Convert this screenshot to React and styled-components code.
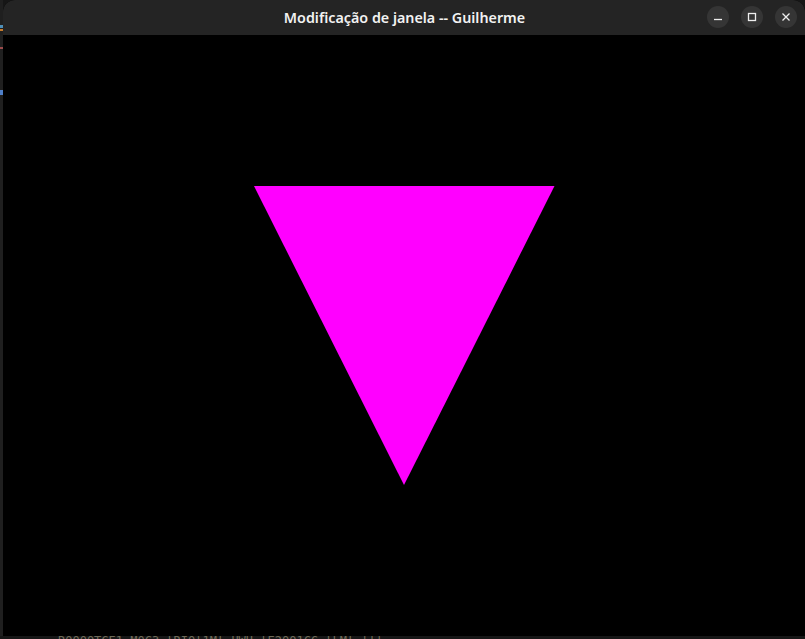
import React from 'react';
import styled, { createGlobalStyle } from 'styled-components';

const GlobalStyle = createGlobalStyle`
  html, body { margin: 0; padding: 0; background: #1c1c1c; overflow: hidden; }
  #root { width: 805px; height: 639px; }
`;

const Desktop = styled.div`
  width: 805px;
  height: 639px;
  display: flex;
  flex-direction: column;
  background: #161616;
  overflow: hidden;
`;

const Row = styled.div`
  display: flex;
  height: 636px;
`;

// strip of the editor behind the window, left edge
const Behind = styled.div`
  width: 3px;
  flex: none;
  background: #1f1f1f;
  position: relative;
`;

const Speck = styled.span`
  position: absolute;
  left: 0;
  top: ${p => p.top}px;
  width: 3px;
  height: ${p => p.h}px;
  background: ${p => p.color};
`;

const Window = styled.div`
  flex: 1;
  display: flex;
  flex-direction: column;
  border-radius: 12px 12px 0 0;
  overflow: hidden;
  background: #000;
`;

const TitleBar = styled.div`
  height: 35px;
  flex: none;
  background: #242424;
  display: flex;
  align-items: center;
  justify-content: center;
  position: relative;
`;

const Title = styled.div`
  font-family: "Noto Sans", "Open Sans", sans-serif;
  font-weight: 600;
  font-size: 14.3px;
  letter-spacing: 0;
  color: #f2f2f2;
  margin-left: 1px;
`;

const Controls = styled.div`
  position: absolute;
  right: 8px;
  top: 6px;
  display: flex;
  gap: 12px;
`;

const CtlButton = styled.div`
  width: 22px;
  height: 22px;
  border-radius: 50%;
  background: #353535;
  display: flex;
  align-items: center;
  justify-content: center;
`;

const Canvas = styled.div`
  flex: 1;
  background: #000;
`;

const BottomStrip = styled.div`
  height: 3px;
  overflow: hidden;
  padding-left: 58px;
  font-family: "DejaVu Sans Mono", monospace;
  font-size: 12px;
  line-height: 12px;
  color: #6f6a58;
  white-space: pre;
`;

const BottomText = styled.div`
  margin-top: -1px;
`;

export default function App() {
  return (
    <Desktop>
      <GlobalStyle />
      <Row>
        <Behind>
          <Speck top={25} h={3} color="#4f8fb8" />
          <Speck top={29} h={2} color="#c47a2c" />
          <Speck top={47} h={2} color="#9a4b4b" />
          <Speck top={90} h={5} color="#4f7fc8" />
        </Behind>
        <Window>
          <TitleBar>
            <Title>Modificação de janela -- Guilherme</Title>
            <Controls>
              <CtlButton>
                <svg width="10" height="10" viewBox="0 0 10 10">
                  <line x1="1" y1="7.5" x2="9" y2="7.5" stroke="#eee" strokeWidth="1.3" />
                </svg>
              </CtlButton>
              <CtlButton>
                <svg width="10" height="10" viewBox="0 0 10 10">
                  <rect x="1.5" y="1.5" width="7" height="7" fill="none" stroke="#eee" strokeWidth="1.3" />
                </svg>
              </CtlButton>
              <CtlButton>
                <svg width="10" height="10" viewBox="0 0 10 10">
                  <path d="M1.5 1.5 L8.5 8.5 M8.5 1.5 L1.5 8.5" stroke="#eee" strokeWidth="1.3" />
                </svg>
              </CtlButton>
            </Controls>
          </TitleBar>
          <Canvas>
            <svg width="802" height="601" viewBox="0 0 802 601" style={{ display: 'block' }}>
              <polygon points="251,151 551.5,151 401,450" fill="#ff00ff" />
            </svg>
          </Canvas>
        </Window>
      </Row>
      <BottomStrip>
        <BottomText>ROOOOTCE1 M0C3 lRIOl1Ml UWU lE2OO1CC lLMl lll</BottomText>
      </BottomStrip>
    </Desktop>
  );
}
